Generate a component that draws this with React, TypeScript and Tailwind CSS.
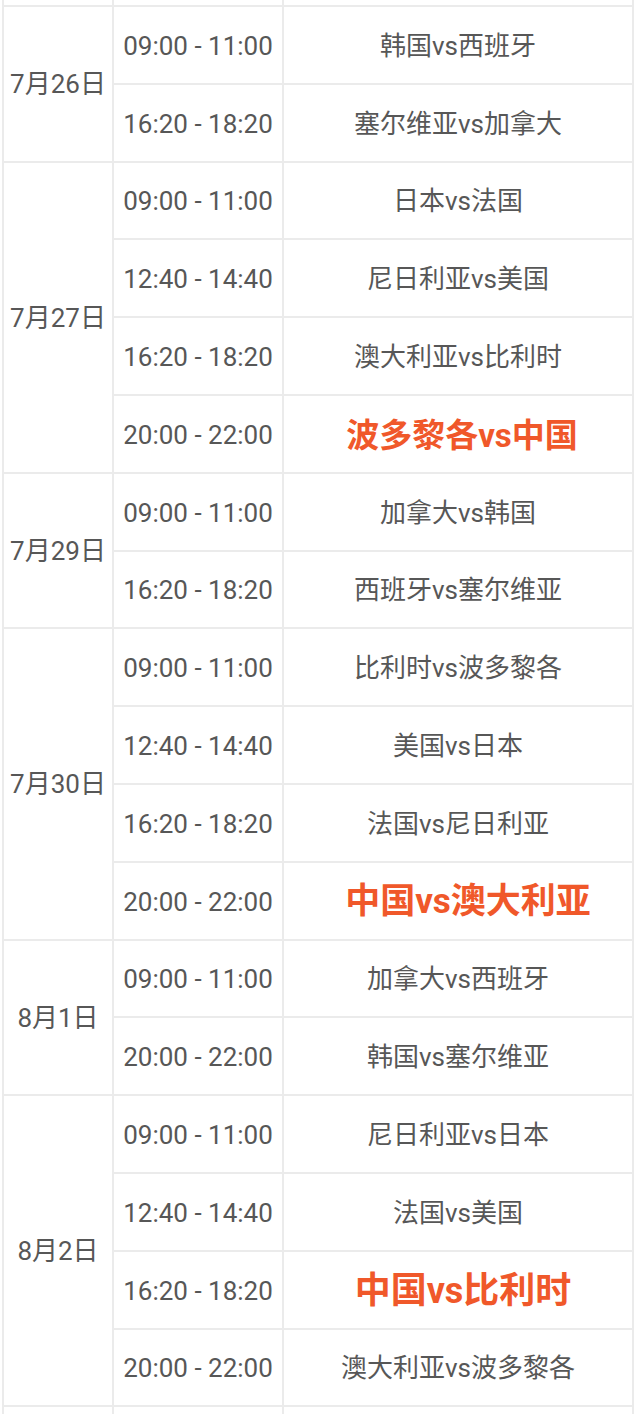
import React from 'react';

type Match = { time: string; teams: string; hot?: string };
type Day = { date: string; matches: Match[] };

const days: Day[] = [
    {
        date: '7月26日',
        matches: [
            { time: '09:00 - 11:00', teams: '韩国vs西班牙' },
            { time: '16:20 - 18:20', teams: '塞尔维亚vs加拿大' },
        ],
    },
    {
        date: '7月27日',
        matches: [
            { time: '09:00 - 11:00', teams: '日本vs法国' },
            { time: '12:40 - 14:40', teams: '尼日利亚vs美国' },
            { time: '16:20 - 18:20', teams: '澳大利亚vs比利时' },
            { time: '20:00 - 22:00', teams: '波多黎各vs中国', hot: 'text-[33px] pl-[8px]' },
        ],
    },
    {
        date: '7月29日',
        matches: [
            { time: '09:00 - 11:00', teams: '加拿大vs韩国' },
            { time: '16:20 - 18:20', teams: '西班牙vs塞尔维亚' },
        ],
    },
    {
        date: '7月30日',
        matches: [
            { time: '09:00 - 11:00', teams: '比利时vs波多黎各' },
            { time: '12:40 - 14:40', teams: '美国vs日本' },
            { time: '16:20 - 18:20', teams: '法国vs尼日利亚' },
            { time: '20:00 - 22:00', teams: '中国vs澳大利亚', hot: 'text-[35px] pl-[20px]' },
        ],
    },
    {
        date: '8月1日',
        matches: [
            { time: '09:00 - 11:00', teams: '加拿大vs西班牙' },
            { time: '20:00 - 22:00', teams: '韩国vs塞尔维亚' },
        ],
    },
    {
        date: '8月2日',
        matches: [
            { time: '09:00 - 11:00', teams: '尼日利亚vs日本' },
            { time: '12:40 - 14:40', teams: '法国vs美国' },
            { time: '16:20 - 18:20', teams: '中国vs比利时', hot: 'text-[36px] pl-[10px]' },
            { time: '20:00 - 22:00', teams: '澳大利亚vs波多黎各' },
        ],
    },
];

const font = "font-['Roboto','Noto_Sans_CJK_SC',sans-serif]";

export default function App() {
    return (
        <div className={`w-[640px] h-[1414px] overflow-hidden bg-white ${font}`}>
            <div className="ml-[2px] w-[632px] grid grid-cols-[108px_168px_1fr] grid-rows-[5px_repeat(18,75.8px)_8px] gap-[2px] bg-[#ebebeb] border-x-2 border-[#ebebeb]">
                {/* partial row from the previous day */}
                <div className="bg-white" />
                <div className="bg-white" />
                <div className="bg-white" />

                {days.map((day) => (
                    <React.Fragment key={day.date}>
                        <div
                            className={`col-start-1 bg-white flex items-center justify-center pt-[2px] text-[26px] text-[#575757] ${day.matches.length === 4 ? 'row-span-4' : 'row-span-2'}`}
                        >
                            {day.date}
                        </div>
                        {day.matches.map((m, i) => (
                            <React.Fragment key={i}>
                                <div className="col-start-2 bg-white flex items-center justify-center pt-[3px] text-[26px] text-[#575757]">
                                    {m.time}
                                </div>
                                <div
                                    className={`col-start-3 bg-white flex items-center justify-center pt-[3px] ${m.hot ? `${m.hot} font-bold text-[#f0582a]` : 'text-[26px] text-[#575757]'}`}
                                >
                                    {m.teams}
                                </div>
                            </React.Fragment>
                        ))}
                    </React.Fragment>
                ))}

                {/* partial row of the next day */}
                <div className="col-start-1 bg-white" />
                <div className="bg-white" />
                <div className="bg-white" />
            </div>
        </div>
    );
}
